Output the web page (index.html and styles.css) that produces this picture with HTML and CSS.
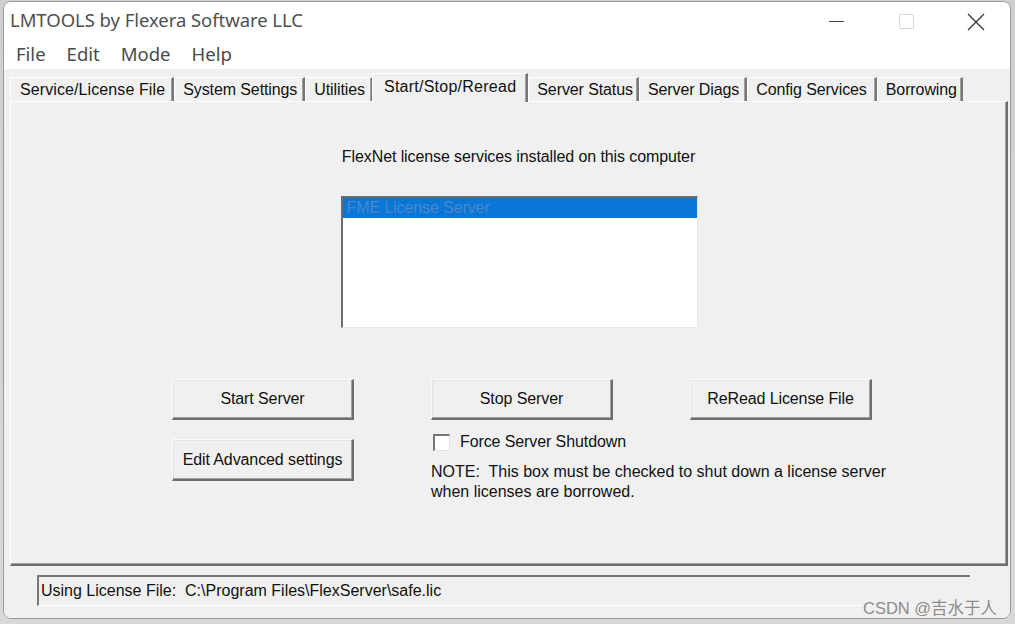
FILE: index.html
```html
<!DOCTYPE html>
<html>
<head>
<meta charset="utf-8">
<link rel="stylesheet" href="styles.css">
</head>
<body>
<div class="desk">
  <div class="window">
    <div class="titlebar">
      <span class="title">LMTOOLS by Flexera Software LLC</span>
      <div class="controls">
        <span class="ctl min"><span class="min-line"></span></span>
        <span class="ctl max"><span class="max-box"></span></span>
        <span class="ctl close">
          <svg width="18" height="18" viewBox="0 0 18 18"><path d="M1 1 L17 17 M17 1 L1 17" stroke="#333" stroke-width="1.2" fill="none"/></svg>
        </span>
      </div>
    </div>
    <div class="menubar">
      <span class="menu">File</span>
      <span class="menu">Edit</span>
      <span class="menu">Mode</span>
      <span class="menu">Help</span>
    </div>
    <div class="client">
      <div class="tabs">
        <div class="tab wide">Service/License File</div>
        <div class="tab">System Settings</div>
        <div class="tab">Utilities</div>
        <div class="tab active">Start/Stop/Reread</div>
        <div class="tab tight">Server Status</div>
        <div class="tab">Server Diags</div>
        <div class="tab roomy">Config Services</div>
        <div class="tab tight">Borrowing</div>
      </div>
      <div class="panel">
        <div class="caption">FlexNet license services installed on this computer</div>
        <div class="listbox">
          <div class="item selected">FME License Server</div>
        </div>
        <div class="actions">
          <div class="col">
            <button class="btn">Start Server</button>
            <button class="btn second">Edit Advanced settings</button>
          </div>
          <div class="col">
            <button class="btn">Stop Server</button>
            <label class="check"><span class="box"></span><span>Force Server Shutdown</span></label>
            <div class="note">NOTE:&nbsp; This box must be checked to shut down a license server<br>when licenses are borrowed.</div>
          </div>
          <div class="col">
            <button class="btn">ReRead License File</button>
          </div>
        </div>
      </div>
      <div class="statusbar">
        <div class="statusfield">Using License File:&nbsp; C:\Program Files\FlexServer\safe.lic</div>
      </div>
    </div>
  </div>
  <div class="watermark">CSDN @吉水于人</div>
</div>
</body>
</html>
```

FILE: styles.css
```css
html, body {
  margin: 0;
  padding: 0;
}
body {
  width: 1015px;
  height: 624px;
  overflow: hidden;
  background: #d4d4d4;
  font-family: "Liberation Sans", Arial, sans-serif;
}
.desk {
  position: relative;
  width: 1015px;
  height: 624px;
  padding: 1px 0 0 3px;
  box-sizing: border-box;
  background: linear-gradient(#cfcfcf, #d8d8d8);
}
.window {
  width: 1008px;
  height: 618px;
  box-sizing: border-box;
  border: 1px solid #9a9a9a;
  border-radius: 8px;
  background: #f0f0f0;
  overflow: hidden;
  display: flex;
  flex-direction: column;
}
.titlebar {
  height: 39px;
  flex: none;
  background: #fff;
  display: flex;
  align-items: center;
  justify-content: space-between;
}
.title {
  font-family: "Noto Sans", "Open Sans", sans-serif;
  font-size: 18.5px;
  color: #505050;
  padding-left: 6px;
  padding-bottom: 5px;
  letter-spacing: -0.05px;
}
.controls {
  display: flex;
  height: 39px;
  align-items: center;
  margin-right: -1px;
}
.ctl {
  width: 70px;
  height: 39px;
  display: flex;
  align-items: center;
  justify-content: center;
}
.ctl.min {
  padding-bottom: 1px;
}
.min-line {
  width: 15px;
  height: 1px;
  background: #444;
}
.max-box {
  width: 13px;
  height: 13px;
  border: 1px solid #d8d8d8;
  border-radius: 2px;
}
.menubar {
  height: 28px;
  flex: none;
  background: #fff;
  display: flex;
  align-items: center;
  padding-left: 12px;
  padding-bottom: 4px;
  box-sizing: border-box;
}
.menu {
  font-family: "Noto Sans", "Open Sans", sans-serif;
  font-size: 18.5px;
  color: #4a4a4a;
  margin-right: 21px;
}
.client {
  flex: 1;
  background: #f0f0f0;
  padding: 4px 2px 0 6px;
  display: flex;
  flex-direction: column;
}
.tabs {
  height: 28px;
  display: flex;
  align-items: flex-end;
}
.tab {
  height: 24px;
  box-sizing: border-box;
  display: flex;
  align-items: center;
  font-size: 16px;
  color: #111;
  padding: 1px 6px 0 8px;
  border-left: 1px solid #fff;
  border-top: 1px solid #fff;
  border-right: 2px solid #777;
  box-shadow: inset -1px 0 #a0a0a0;
  letter-spacing: -0.1px;
}
.tab.wide {
  padding-left: 9px;
  letter-spacing: 0.1px;
  padding-right: 7px;
}
.tab.tight {
  padding-right: 4px;
}
.tab.roomy {
  padding-right: 8px;
}
.tab.active {
  height: 29px;
  margin-left: -1px;
  margin-bottom: -1px;
  padding: 0 10px 3px 11px;
  letter-spacing: 0.25px;
  background: #f0f0f0;
  position: relative;
  z-index: 1;
}
.panel {
  height: 465px;
  box-sizing: border-box;
  border-top: 1px solid #fff;
  border-left: 1px solid #fff;
  border-right: 2px solid #6e6e6e;
  border-bottom: 2px solid #6e6e6e;
  box-shadow: inset -1px -1px #a0a0a0;
  display: flex;
  flex-direction: column;
  align-items: center;
  padding-top: 45px;
}
.caption {
  font-size: 16px;
  color: #111;
  line-height: 20px;
  letter-spacing: -0.1px;
  margin-left: 20px;
}
.listbox {
  margin-top: 29px;
  margin-left: 21px;
  width: 357px;
  height: 132px;
  box-sizing: border-box;
  background: #fff;
  border-top: 2px solid #6e6e6e;
  border-left: 2px solid #6e6e6e;
  border-right: 1px solid #e8e8e8;
  border-bottom: 1px solid #e8e8e8;
}
.item {
  height: 20px;
  line-height: 20px;
  font-size: 16px;
  padding-left: 4px;
  letter-spacing: -0.1px;
}
.item.selected {
  background: #0a76d6;
  color: #4a88cc;
}
.actions {
  align-self: flex-start;
  margin-top: 51px;
  padding-left: 161px;
  display: grid;
  grid-template-columns: 182px 182px 182px;
  column-gap: 77px;
}
.col {
  display: flex;
  flex-direction: column;
  align-items: flex-start;
}
.btn {
  width: 182px;
  height: 41px;
  box-sizing: border-box;
  background: #f0f0f0;
  font-family: "Liberation Sans", Arial, sans-serif;
  font-size: 16px;
  color: #111;
  letter-spacing: -0.1px;
  border-style: solid;
  border-width: 1px 2px 2px 1px;
  border-color: #fbfbfb #6e6e6e #6e6e6e #fbfbfb;
  box-shadow: inset -1px -1px #a0a0a0, inset 1px 1px #e3e3e3;
  padding: 0;
}
.btn.second {
  margin-top: 19px;
  height: 42px;
}
.check {
  margin-top: 13px;
  display: flex;
  align-items: center;
  font-size: 16px;
  color: #111;
  letter-spacing: -0.1px;
  white-space: nowrap;
}
.box {
  width: 17px;
  height: 17px;
  box-sizing: border-box;
  background: #fff;
  border-top: 2px solid #777;
  border-left: 2px solid #777;
  border-right: 1px solid #e3e3e3;
  border-bottom: 1px solid #e3e3e3;
  margin: 0 10px 0 2px;
}
.note {
  margin-top: 11px;
  font-size: 16px;
  line-height: 20px;
  color: #111;
  letter-spacing: 0;
  white-space: nowrap;
}
.statusbar {
  flex: 1;
  padding: 9px 0 0 27px;
}
.statusfield {
  width: 933px;
  height: 31px;
  box-sizing: border-box;
  border-top: 2px solid #777;
  border-left: 2px solid #777;
  border-bottom: 1px solid #fff;
  display: flex;
  align-items: center;
  padding-left: 2px;
  font-size: 16px;
  color: #111;
  letter-spacing: 0;
}
.watermark {
  position: absolute;
  left: 863px;
  top: 595px;
  font-family: "Liberation Sans", "Noto Sans CJK SC", sans-serif;
  font-size: 16.5px;
  color: #8c8c8c;
}
```
